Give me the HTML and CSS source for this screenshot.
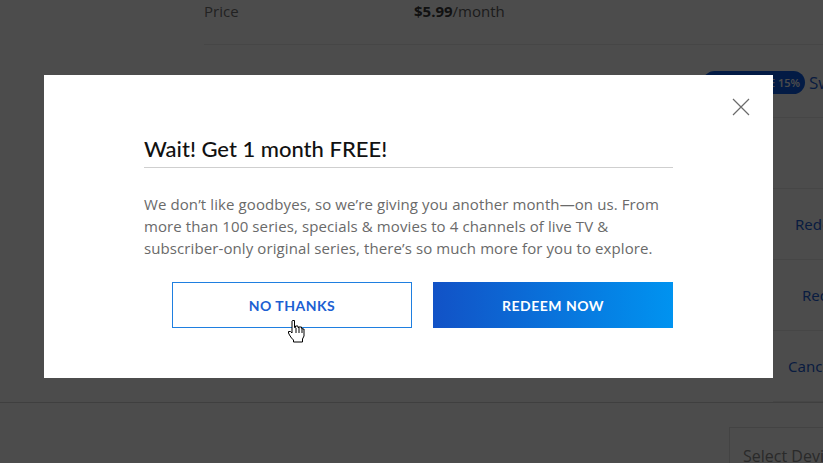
FILE: index.html
```html
<!DOCTYPE html>
<html lang="en">
<head>
  <meta charset="UTF-8" />
  <title>Account</title>
  <link rel="stylesheet" href="styles.css">
</head>
<body>
  <div class="page">
    <div class="plan-row">
      <span class="plan-label">Price</span>
      <span class="plan-value"><b>$5.99</b>/month</span>
    </div>

    <div class="plan-row plan-row--promo">
      <span class="promo-badge">SAVE 15%</span>
      <span class="promo-link">Switch</span>
    </div>

    <div class="action-row"></div>
    <div class="action-row"><span class="action-link">Redeem</span></div>
    <div class="action-row action-row--b"><span class="action-link">Redeem</span></div>
    <div class="action-row action-row--c"><span class="action-link">Cancel</span></div>

    <div class="devices">
      <div class="device-select">Select Device</div>
    </div>
  </div>

  <div class="overlay">
    <div class="modal">
      <button class="modal-close" aria-label="Close">
        <svg width="18" height="18" viewBox="0 0 18 18">
          <path d="M1 1 L17 17 M17 1 L1 17" stroke="#6b6b6b" stroke-width="1.2" fill="none" />
        </svg>
      </button>

      <h2 class="modal-title">Wait! Get 1 month FREE!</h2>

      <p class="modal-text">
        We don’t like goodbyes, so we’re giving you another month—on us. From
        more than 100 series, specials &amp; movies to 4 channels of live TV &amp;
        <span class="nowrap">subscriber-only</span> original series, there’s so much more for you to explore.
      </p>

      <div class="modal-actions">
        <button class="btn btn-outline">NO THANKS</button>
        <button class="btn btn-primary">REDEEM NOW</button>

        <!-- mouse pointer from the capture -->
        <svg class="pointer" width="20" height="24" viewBox="0 0 20 24">
          <path d="M5.5 1.5 h2 v7 h1 v-1.5 h2.5 v1.5 h1 v-0.5 h2.5 v1.5 h1 v0.5 h1.5 v7 l-1.5 3 v3 h-9 v-2 l-2 -2 l-2 -3 l-1 -2 v-1.5 h2 l1.5 1.5 v-12 z"
                fill="#fff" stroke="#000" stroke-width="1" stroke-linejoin="miter" />
          <path d="M9 9 v5 M12 9 v5 M15 10 v4" stroke="#000" stroke-width="1" />
        </svg>
      </div>
    </div>
  </div>
</body>
</html>
```

FILE: styles.css
```css
body {
  margin: 0;
  background: #fff;
  font-family: 'Open Sans', 'Liberation Sans', sans-serif;
  overflow: hidden;
  height: 463px;
}

.page {
  height: 463px;
  overflow: hidden;
}

.plan-row {
  margin-left: 204px;
  height: 44px;
  border-bottom: 1px solid #ececec;
  display: flex;
  align-items: flex-start;
  font-size: 15px;
  color: #737373;
}

.plan-label {
  width: 210px;
  padding-top: 1px;
}

.plan-value {
  padding-top: 1px;
  color: #5e5e5e;
}

.plan-value b {
  color: #3a3a3a;
}

.plan-row--promo {
  height: 73px;
  justify-content: flex-end;
  padding-top: 26px;
  box-sizing: border-box;
}

.promo-badge {
  background: #0a5ce6;
  color: #fff;
  border-radius: 12px;
  font-size: 11px;
  font-weight: 600;
  height: 23px;
  line-height: 23px;
  padding: 0 5px 0 46px;
  margin-right: 4px;
  white-space: nowrap;
}

.promo-link {
  color: #1f5fd6;
  font-size: 17px;
  line-height: 23px;
  width: 14px;
  overflow: hidden;
  white-space: nowrap;
}

.action-row {
  margin-left: 773px;
  height: 70px;
  border-bottom: 1px solid #ececec;
  display: flex;
  align-items: center;
  font-size: 15px;
  overflow: hidden;
}

.action-link {
  color: #1f5fd6;
  white-space: nowrap;
  margin-left: 22px;
  font-family: 'Noto Sans', sans-serif;
}

.action-row--b .action-link {
  margin-left: 29px;
}

.action-row--c .action-link {
  margin-left: 15px;
}

.devices {
  border-top: 1px solid #d2d2d2;
  padding: 24px 0 0 729px;
}

.device-select {
  border: 1px solid #e0e0e0;
  border-right: none;
  height: 60px;
  padding: 17px 0 0 13px;
  box-sizing: border-box;
  font-size: 16px;
  color: #8c8c8c;
  white-space: nowrap;
  overflow: hidden;
}

.overlay {
  position: fixed;
  inset: 0;
  background: rgba(0, 0, 0, 0.7);
  padding: 75px 0 0 44px;
}

.modal {
  position: relative;
  background: #fff;
  width: 729px;
  height: 303px;
  box-sizing: border-box;
  padding: 59px 100px 0;
  font-family: 'Lato', 'Noto Sans', sans-serif;
}

.modal-close {
  position: absolute;
  top: 23px;
  right: 23px;
  background: none;
  border: none;
  padding: 0;
  width: 18px;
  height: 18px;
  cursor: pointer;
}

.modal-title {
  margin: 0;
  font-size: 22px;
  font-weight: 500;
  color: #111;
  padding-bottom: 4px;
  border-bottom: 1px solid #cfcfcf;
  line-height: 29px;
}

.modal-text {
  margin: 25px 0 0;
  font-family: 'Open Sans', 'Noto Sans', sans-serif;
  font-size: 15px;
  letter-spacing: 0.1px;
  line-height: 22px;
  color: #6a6a6a;
}

.nowrap {
  white-space: nowrap;
}

.modal-actions {
  position: relative;
  display: flex;
  justify-content: flex-end;
  gap: 21px;
  margin-top: 23px;
}

.btn {
  width: 240px;
  height: 46px;
  font-family: 'Lato', 'Noto Sans', sans-serif;
  font-size: 14px;
  font-weight: 700;
  letter-spacing: 0.5px;
  cursor: pointer;
}

.btn-outline {
  background: #fff;
  color: #1c5fd2;
  border: 1px solid #1f7fe0;
}

.btn-primary {
  background: linear-gradient(90deg, #1252c6, #0093f0);
  color: #fff;
  border: none;
}

.pointer {
  position: absolute;
  left: 143px;
  top: 37px;
}
```
